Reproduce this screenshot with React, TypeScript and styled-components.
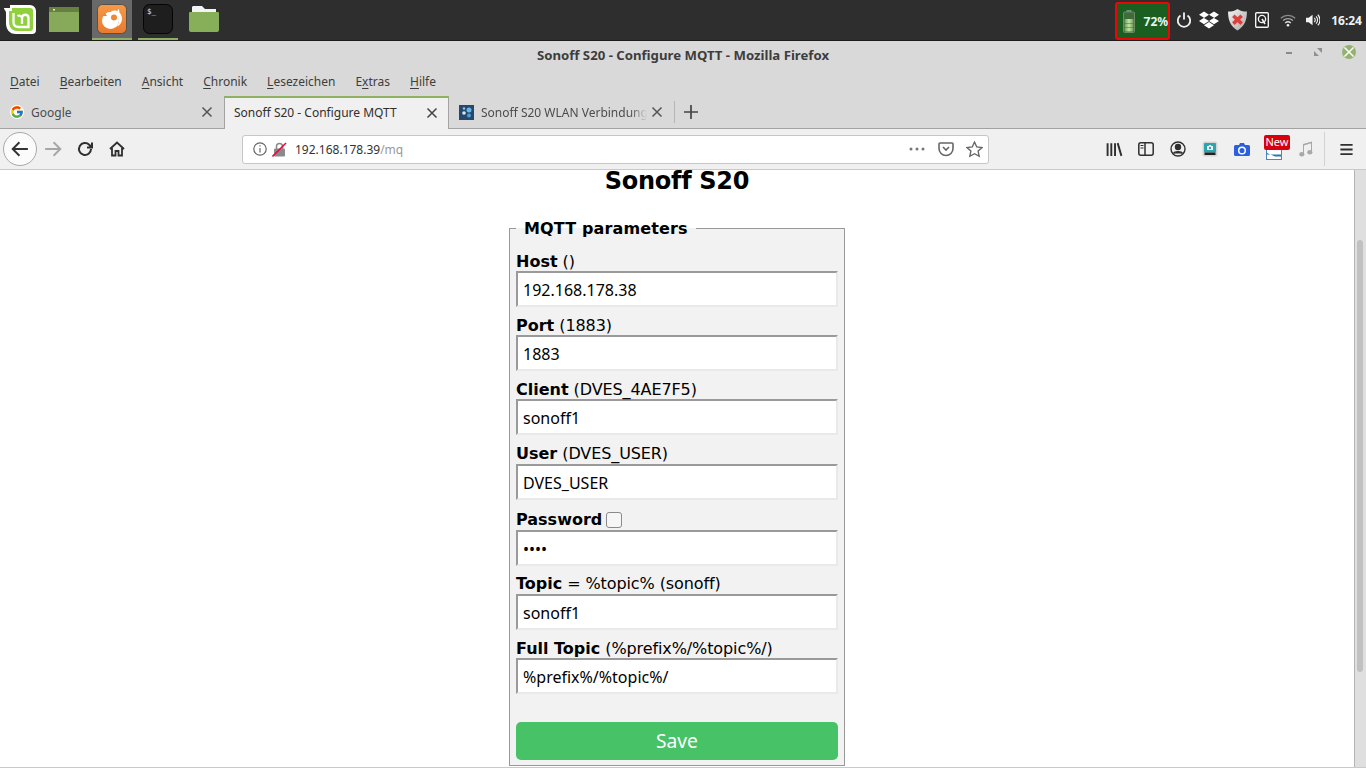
import { createGlobalStyle, styled } from "styled-components";
import { FcGoogle } from "react-icons/fc";
import { FaDropbox } from "react-icons/fa";

const GlobalStyle = createGlobalStyle`
  html, body {
    margin: 0;
    padding: 0;
    height: 768px;
    overflow: hidden;
    background: #d9d9d9;
  }
  * { box-sizing: border-box; }
`;

const Screen = styled.div`
  width: 1366px;
  height: 768px;
  display: flex;
  flex-direction: column;
  overflow: hidden;
  font-family: "Noto Sans", sans-serif;
`;

/* desktop panel */
const Panel = styled.div`
  height: 41px;
  flex: none;
  display: flex;
  align-items: flex-start;
  background: #2e2e2e;
  border-bottom: 1px solid #1c1c1c;
`;
const Launcher = styled.div`
  display: flex;
  align-items: center;
  height: 40px;
  padding-left: 4px;
`;
const TaskButton = styled.div<{ $active?: boolean; $running?: boolean; $w?: number; $gap?: number }>`
  width: ${(p) => p.$w ?? 40}px;
  height: 40px;
  display: flex;
  align-items: center;
  justify-content: center;
  margin-right: ${(p) => p.$gap ?? 6}px;
  background: ${(p) => (p.$active ? "#696969" : "transparent")};
  border-bottom: 2px solid ${(p) => (p.$running ? "#8fae63" : "transparent")};
`;
const Tray = styled.div`
  margin-left: auto;
  display: flex;
  align-items: center;
  height: 40px;
  padding-right: 4px;
`;
const BatteryBox = styled.div`
  width: 55px;
  height: 38px;
  margin-top: 2px;
  display: flex;
  align-items: center;
  justify-content: space-between;
  padding: 0 0 0 6px;
  background: #1a5f1f;
  border: 2px solid #ee0606;
  border-radius: 3px;
`;
const BatteryText = styled.span`
  font: bold 12px "Noto Sans", sans-serif;
  color: #e6f5f0;
`;
const TrayIcon = styled.div<{ $w: number }>`
  width: ${(p) => p.$w}px;
  height: 40px;
  display: flex;
  align-items: center;
  justify-content: center;
  color: #fff;
`;
const Clock = styled.span`
  font: bold 12px "Noto Sans", sans-serif;
  color: #eef2f5;
  margin-left: 11px;
`;

/* window chrome */
const TitleBar = styled.div`
  height: 28px;
  flex: none;
  position: relative;
  display: flex;
  align-items: center;
  justify-content: center;
  font-size: 13.2px;
  font-weight: 700;
  color: #3d3d3d;
`;
const WindowButtons = styled.div`
  position: absolute;
  right: 10px;
  top: 4px;
  display: flex;
  align-items: center;
  gap: 19px;
`;
const CloseDot = styled.div`
  width: 14px;
  height: 14px;
  border-radius: 50%;
  background: #93b26f;
  display: flex;
  align-items: center;
  justify-content: center;
`;
const MenuBar = styled.div`
  height: 25px;
  flex: none;
  display: flex;
  align-items: center;
  gap: 20px;
  padding-left: 10px;
  font-size: 12px;
  color: #3d3d3d;
`;
const MenuItem = styled.span`
  u { text-underline-offset: 2px; }
`;
const TabStrip = styled.div`
  height: 35px;
  flex: none;
  display: flex;
  align-items: flex-start;
  padding-top: 2px;
  border-bottom: 1px solid #a3a3a3;
`;
const Tab = styled.div<{ $active?: boolean; $w?: number }>`
  width: ${(p) => p.$w ?? 225}px;
  height: ${(p) => (p.$active ? 33 : 32)}px;
  flex: none;
  display: flex;
  align-items: center;
  gap: 7px;
  padding: ${(p) => (p.$active ? "0 10px 2px 9px" : "0 11px 0 10px")};
  font-size: 12px;
  color: ${(p) => (p.$active ? "#2f2f2f" : "#4c4c4c")};
  background: ${(p) => (p.$active ? "#f0f0f0" : "transparent")};
  border-top: ${(p) => (p.$active ? "2px solid #8fb15f" : "none")};
  border-left: ${(p) => (p.$active ? "1px solid #a3a3a3" : "none")};
  border-right: ${(p) => (p.$active ? "1px solid #a3a3a3" : "none")};
`;
const TabTitle = styled.span<{ $fade?: boolean }>`
  flex: 1;
  min-width: 0;
  white-space: nowrap;
  overflow: hidden;
  ${(p) =>
    p.$fade
      ? `margin-right: -3px; -webkit-mask-image: linear-gradient(to right, #000 90%, transparent);`
      : ""}
`;
const Favicon = styled(FcGoogle)`
  flex: none;
  background: #fff;
  border-radius: 7px;
`;
const FaviconSvg = styled.svg`
  flex: none;
`;
const CloseSvg = styled.svg`
  flex: none;
`;
const NewTab = styled.div`
  width: 32px;
  height: 22px;
  margin-top: 5px;
  border-left: 1px solid #b5b5b5;
  display: flex;
  align-items: center;
  justify-content: center;
  color: #444;
`;
const NavBar = styled.div`
  height: 41px;
  flex: none;
  display: flex;
  align-items: center;
  padding: 0 3px;
  background: #f0f0f0;
  border-bottom: 1px solid #c9c9c9;
`;
const BackButton = styled.div`
  width: 34px;
  height: 34px;
  flex: none;
  border-radius: 50%;
  border: 1px solid #a9a9a9;
  background: #fbfbfb;
  display: flex;
  align-items: center;
  justify-content: center;
  color: #333;
`;
const NavIcon = styled.div<{ $w?: number; $dim?: boolean }>`
  width: ${(p) => p.$w ?? 32}px;
  height: 32px;
  flex: none;
  display: flex;
  align-items: center;
  justify-content: center;
  color: ${(p) => (p.$dim ? "#a6a6a6" : "#2f2f2f")};
  position: relative;
`;
const UrlBar = styled.div`
  width: 747px;
  height: 29px;
  flex: none;
  margin: 0 109px 0 109px;
  display: flex;
  align-items: center;
  background: #fff;
  border: 1px solid #c6c6c6;
  border-radius: 3px;
  padding: 0 0 0 9px;
  font-size: 12px;
`;
const UrlText = styled.span`
  flex: 1;
  margin-left: 8px;
  color: #333;
  span { color: #999; }
`;
const UrlIcon = styled.div<{ $w: number; $gap?: number }>`
  width: ${(p) => p.$w}px;
  margin-left: ${(p) => p.$gap ?? 0}px;
  display: flex;
  align-items: center;
  justify-content: center;
  color: #666;
`;
const EnvelopeSvg = styled.svg`
  margin-top: 5px;
`;
const NewBadge = styled.span`
  position: absolute;
  left: 6px;
  top: 2px;
  width: 26px;
  height: 15px;
  line-height: 14px;
  text-align: center;
  font-size: 11px;
  color: #fff;
  background: #d7000f;
  border-radius: 2px;
`;
const ToolSeparator = styled.div`
  width: 1px;
  height: 34px;
  flex: none;
  background: #d2d2d2;
  margin: 0 4px 0 2px;
`;

/* page */
const Viewport = styled.div`
  flex: 1;
  min-height: 0;
  display: flex;
  background: #fff;
  border-bottom: 1px solid #c9c9c9;
`;
const Page = styled.div`
  flex: 1;
  display: flex;
  flex-direction: column;
  align-items: center;
  font-family: "DejaVu Sans", sans-serif;
  font-size: 16px;
  color: #000;
`;
const Heading = styled.h3`
  margin: 0 0 26px;
  font-size: 24px;
  line-height: 23px;
  font-weight: 700;
  letter-spacing: -0.3px;
  text-align: center;
`;
const FormBox = styled.fieldset`
  width: 336px;
  margin: 0;
  padding: 13px 6px 0;
  flex: none;
  background: #f2f2f2;
  border: 1px solid #999;
`;
const Legend = styled.legend`
  padding: 0 8px;
  font-weight: 700;
  line-height: 19px;
  letter-spacing: 0.13px;
`;
const Field = styled.div`
  margin-bottom: 8.2px;
`;
const FieldLabel = styled.label<{ $tall?: boolean }>`
  display: flex;
  align-items: center;
  gap: 4px;
  height: ${(p) => (p.$tall ? 22 : 20)}px;
  white-space: pre;
  line-height: 19px;
  padding-top: ${(p) => (p.$tall ? 2 : 0)}px;
`;
const Hint = styled.span`
  letter-spacing: -0.1px;
`;
const TextInput = styled.input`
  display: block;
  width: 100%;
  height: 36px;
  padding: 2px 5px 0;
  border: 2px solid;
  border-color: #9a9a9a #e9e9e9 #e9e9e9 #9a9a9a;
  border-radius: 0;
  background: #fff;
  font: 16px "Noto Sans", sans-serif;
  color: #000;
  outline: none;
`;
const Check = styled.span`
  display: inline-block;
  width: 16px;
  height: 16px;
  background: #f6f6f6;
  border: 1px solid #8a8a8a;
  border-radius: 3px;
`;
const SaveButton = styled.button`
  display: block;
  width: 100%;
  height: 38px;
  margin: 27.7px 0 5px;
  border: 0;
  border-radius: 5px;
  background: #47c266;
  color: #fff;
  font: 19.2px "Noto Sans", sans-serif;
  line-height: 38px;
  padding: 0;
`;
const ScrollTrack = styled.div`
  width: 12px;
  flex: none;
  background: #dfdfdf;
  border-left: 1px solid #b4b4b4;
  padding: 70px 2px 0;
`;
const ScrollThumb = styled.div`
  width: 6px;
  height: 432px;
  background: #c1c1c1;
  border-radius: 3px;
`;

const Close = ({ c = "#555" }: { c?: string }) => (
  <CloseSvg width="12" height="12" viewBox="0 0 12 12">
    <path d="M1.5 1.5l9 9M10.5 1.5l-9 9" stroke={c} strokeWidth="1.5" />
  </CloseSvg>
);

const MintLogo = () => (
  <svg width="32" height="29" viewBox="0 0 32 29">
    <path d="M0 3H6V0H26a6 6 0 0 1 6 6V25a4 4 0 0 1-4 4H12C5 29 2 24 2 18V8C2 5 0 5 0 3z" fill="#fff" />
    <path d="M8 3H26a3 3 0 0 1 3 3V23a3 3 0 0 1-3 3H13C8 26 5 22 5 17V6H8z" fill="#8fd03c" />
    <path d="M9.500 8V17C9.500 20 11.500 22 14.500 22H24.500V12.500a3.300 3.300 0 0 0-6.500 0V19M18 12.500a3.200 3.200 0 0 0-4.500-1.500" fill="none" stroke="#fff" strokeWidth="2.300" />
  </svg>
);

const WindowIcon = () => (
  <svg width="30" height="25" viewBox="0 0 30 25">
    <rect width="30" height="25" fill="#87a95a" />
    <rect width="30" height="5" fill="#66803f" />
    <rect x="4" y="2" width="2" height="1.5" fill="#e8eedd" />
  </svg>
);

const FirefoxIcon = () => (
  <svg width="30" height="30" viewBox="0 0 30 30">
    <defs>
      <linearGradient id="ffTile" x1="0" y1="0" x2="0" y2="1">
        <stop offset="0" stopColor="#f59a48" />
        <stop offset="1" stopColor="#e87a2e" />
      </linearGradient>
    </defs>
    <rect x="0.500" y="0.500" width="29" height="29" rx="5" fill="url(#ffTile)" stroke="#55504a" />
    <circle cx="13.500" cy="16.500" r="8.500" fill="#fff" />
    <path d="M14 7.500c4-2 8-.5 10 3 1.500 3 1.500 7-1 10-1 1-2 1.500-3 2 2-3 2.500-6 1-9-1-2-3-3-4.500-3z" fill="#fff" />
    <path d="M21.500 5c1 1 1 2.500.5 4l-2-1.500z" fill="#fff" />
    <circle cx="17" cy="13.500" r="3" fill="#ee8836" />
    <path d="M5 12l3-3 2 3z" fill="#ee8836" />
  </svg>
);

const TerminalIcon = () => (
  <svg width="30" height="30" viewBox="0 0 30 30">
    <rect x="0.500" y="0.500" width="29" height="29" rx="6" fill="#1e1e1e" stroke="#050505" />
    <text x="4" y="10" fontFamily="DejaVu Sans Mono" fontSize="7.500" fill="#e8e8e8">$_</text>
  </svg>
);

const FolderIcon = () => (
  <svg width="30" height="26" viewBox="0 0 30 26">
    <path d="M4 0h9l3 3h11v3H3V1z" fill="#f3f3f3" />
    <path d="M1 6h28a1 1 0 0 1 1 1v17a2 2 0 0 1-2 2H2a2 2 0 0 1-2-2V7a1 1 0 0 1 1-1z" fill="#87ae58" />
  </svg>
);

const BatteryIcon = () => (
  <svg width="12" height="23" viewBox="0 0 12 23">
    <defs>
      <linearGradient id="batCell" x1="0" y1="0" x2="1" y2="0">
        <stop offset="0" stopColor="#6f9a58" />
        <stop offset="0.500" stopColor="#c2e6a0" />
        <stop offset="1" stopColor="#6f9a58" />
      </linearGradient>
    </defs>
    <rect x="3.500" y="0" width="5" height="2.500" fill="#74907a" />
    <rect x="0.500" y="2" width="11" height="20.500" rx="1" fill="#3e6c3a" stroke="#6b8a66" />
    <rect x="1.500" y="9" width="9" height="4" fill="url(#batCell)" />
    <rect x="1.500" y="13.500" width="9" height="4" fill="url(#batCell)" />
    <rect x="1.500" y="18" width="9" height="3.500" fill="url(#batCell)" />
  </svg>
);

const PowerIcon = () => (
  <svg width="16" height="16" viewBox="0 0 16 16" fill="none" stroke="#f2f2f2" strokeWidth="1.800">
    <path d="M4.500 3.500a6.200 6.200 0 1 0 7 0M8 0.500v7" />
  </svg>
);

const ShieldIcon = () => (
  <svg width="21" height="22" viewBox="0 0 20 21">
    <defs>
      <linearGradient id="shieldFill" x1="0" y1="0" x2="1" y2="1">
        <stop offset="0" stopColor="#f4f4f4" />
        <stop offset="1" stopColor="#a8a8a8" />
      </linearGradient>
    </defs>
    <path d="M10 0c2 1.500 5 2.500 9 2.500 0 8-2 14-9 18C3 16.500 1 10.500 1 2.500 5 2.500 8 1.500 10 0z" fill="url(#shieldFill)" />
    <path d="M6 6.500l8 7.500M14 6.500l-8 7.500" stroke="#d9403a" strokeWidth="3.400" />
  </svg>
);

const DiskIcon = () => (
  <svg width="14" height="16" viewBox="0 0 14 16">
    <rect x="0.700" y="0.700" width="12.600" height="14.600" rx="1" fill="#222" stroke="#f4f4f4" strokeWidth="1.400" />
    <circle cx="7" cy="7" r="3.600" fill="none" stroke="#f4f4f4" strokeWidth="1.400" />
    <path d="M7 7l3 5" stroke="#f4f4f4" strokeWidth="1.600" />
  </svg>
);

const WifiIcon = () => (
  <svg width="16" height="13" viewBox="0 0 16 13" fill="none" strokeWidth="1.300">
    <path d="M.800 4.200c4-3.800 10.400-3.800 14.400 0" stroke="#8d8d8d" />
    <path d="M3 6.600c2.800-2.600 7.200-2.600 10 0" stroke="#a5a5a5" />
    <path d="M5.200 9c1.600-1.400 4-1.400 5.600 0" stroke="#e0e0e0" />
    <circle cx="8" cy="11.300" r="1.300" fill="#f2f2f2" />
  </svg>
);

const VolumeIcon = () => (
  <svg width="18" height="16" viewBox="0 0 16 14" fill="none">
    <path d="M0 4.500h3L7.500 1v12L3 9.500H0z" fill="#f2f2f2" />
    <path d="M9.500 4.500a3.500 3.500 0 0 1 0 5M11.500 2.800a6 6 0 0 1 0 8.400M13.500 1a8.500 8.500 0 0 1 0 12" stroke="#f2f2f2" strokeWidth="1.300" />
  </svg>
);

const LockIcon = () => (
  <svg width="15" height="15" viewBox="0 0 15 15">
    <rect x="2" y="6.500" width="11" height="8" rx="1" fill="#8a8a8a" />
    <path d="M4.500 7V4.500a3 3 0 0 1 6 0V7" fill="none" stroke="#8a8a8a" strokeWidth="1.500" />
    <path d="M0.500 14.500L14 1" stroke="#ff0039" strokeWidth="1.600" />
  </svg>
);

const StrokeIcon = ({ d, w = 16, sw = 1.6 }: { d: string; w?: number; sw?: number }) => (
  <svg width={w} height={w} viewBox="0 0 16 16" fill="none" stroke="currentColor" strokeWidth={sw}>
    <path d={d} />
  </svg>
);

const menus: [string, string, string][] = [
  ["", "D", "atei"],
  ["", "B", "earbeiten"],
  ["", "A", "nsicht"],
  ["", "C", "hronik"],
  ["", "L", "esezeichen"],
  ["E", "x", "tras"],
  ["", "H", "ilfe"],
];

const fields: { name: string; hint: string; value: string; type?: string }[] = [
  { name: "Host", hint: " ()", value: "192.168.178.38" },
  { name: "Port", hint: " (1883)", value: "1883" },
  { name: "Client", hint: " (DVES_4AE7F5)", value: "sonoff1" },
  { name: "User", hint: " (DVES_USER)", value: "DVES_USER" },
  { name: "Password", hint: "", value: "1234", type: "password" },
  { name: "Topic", hint: " = %topic% (sonoff)", value: "sonoff1" },
  { name: "Full Topic", hint: " (%prefix%/%topic%/)", value: "%prefix%/%topic%/" },
];

function App() {
  return (
    <Screen>
      <GlobalStyle />
      <Panel>
        <Launcher>
          <TaskButton $w={32} $gap={13}><MintLogo /></TaskButton>
          <TaskButton $w={30} $gap={13}><WindowIcon /></TaskButton>
          <TaskButton $active $running><FirefoxIcon /></TaskButton>
          <TaskButton $running $gap={11}><TerminalIcon /></TaskButton>
          <TaskButton $w={30}><FolderIcon /></TaskButton>
        </Launcher>
        <Tray>
          <BatteryBox>
            <BatteryIcon />
            <BatteryText>72%</BatteryText>
          </BatteryBox>
          <TrayIcon $w={28}><PowerIcon /></TrayIcon>
          <TrayIcon $w={22}><FaDropbox size={20} /></TrayIcon>
          <TrayIcon $w={34}><ShieldIcon /></TrayIcon>
          <TrayIcon $w={16}><DiskIcon /></TrayIcon>
          <TrayIcon $w={36}><WifiIcon /></TrayIcon>
          <TrayIcon $w={14}><VolumeIcon /></TrayIcon>
          <Clock>16:24</Clock>
        </Tray>
      </Panel>

      <TitleBar>
        Sonoff S20 - Configure MQTT - Mozilla Firefox
        <WindowButtons>
          <svg width="10" height="10" viewBox="0 0 10 10"><rect x="2" y="5" width="6" height="2" fill="#8a8a8a" /></svg>
          <svg width="10" height="10" viewBox="0 0 10 10"><path d="M4 1h5v5zM1 4l5 5H1z" fill="#8f8f8f" /></svg>
          <CloseDot><Close c="#fff" /></CloseDot>
        </WindowButtons>
      </TitleBar>

      <MenuBar>
        {menus.map(([a, u, b]) => (
          <MenuItem key={u + b}>{a}<u>{u}</u>{b}</MenuItem>
        ))}
      </MenuBar>

      <TabStrip>
        <Tab $w={224}>
          <Favicon size={14} />
          <TabTitle>Google</TabTitle>
          <Close />
        </Tab>
        <Tab $active>
          <TabTitle>Sonoff S20 - Configure MQTT</TabTitle>
          <Close c="#444" />
        </Tab>
        <Tab>
          <FaviconSvg width="15" height="15" viewBox="0 0 15 15">
            <rect width="15" height="15" fill="#26486e" />
            <circle cx="10" cy="5" r="2.500" fill="#69b7e3" />
            <circle cx="5" cy="8" r="1.800" fill="#d7e8f3" />
            <circle cx="10" cy="10.500" r="2" fill="#4f9fd0" />
            <circle cx="5" cy="3.500" r="1.200" fill="#8fc8e8" />
          </FaviconSvg>
          <TabTitle $fade>Sonoff S20 WLAN Verbindung herstellen</TabTitle>
          <Close />
        </Tab>
        <NewTab>
          <StrokeIcon d="M8 1v14M1 8h14" sw={1.7} />
        </NewTab>
      </TabStrip>

      <NavBar>
        <BackButton>
          <StrokeIcon w={18} sw={1.7} d="M15 8H1.500M7.500 2L1.500 8l6 6" />
        </BackButton>
        <NavIcon $dim><StrokeIcon w={18} sw={1.7} d="M1 8h13.500M8.500 2l6 6-6 6" /></NavIcon>
        <NavIcon><StrokeIcon w={16} sw={2} d="M14 8a6 6 0 1 1-1.800-4.300L15 6.500M15 1.500v5h-5" /></NavIcon>
        <NavIcon><StrokeIcon w={16} sw={1.8} d="M1 8l7-6.500L15 8M3 7v7.500h3.500V10h3v4.500H13V7" /></NavIcon>
        <UrlBar>
          <UrlIcon $w={15}>
            <svg width="14" height="14" viewBox="0 0 14 14" fill="none" stroke="#666" strokeWidth="1.200">
              <circle cx="7" cy="7" r="6.200" />
              <path d="M7 6v4.500M7 3.200v1.400" />
            </svg>
          </UrlIcon>
          <UrlIcon $w={15} $gap={5}><LockIcon /></UrlIcon>
          <UrlText>192.168.178.39<span>/mq</span></UrlText>
          <UrlIcon $w={28}>
            <svg width="16" height="4" viewBox="0 0 16 4" fill="#777"><circle cx="2" cy="2" r="1.500" /><circle cx="8" cy="2" r="1.500" /><circle cx="14" cy="2" r="1.500" /></svg>
          </UrlIcon>
          <UrlIcon $w={29}>
            <StrokeIcon w={16} d="M2 2h12a1 1 0 0 1 1 1v4.500a7 7 0 0 1-14 0V3a1 1 0 0 1 1-1zM5 6l3 3 3-3" />
          </UrlIcon>
          <UrlIcon $w={28}>
            <StrokeIcon w={17} sw={1.300} d="M8 1l2.100 4.600 5 .6-3.700 3.300 1 4.900L8 12l-4.400 2.400 1-4.900L.900 6.200l5-.6z" />
          </UrlIcon>
        </UrlBar>
        <NavIcon><StrokeIcon w={17} sw={1.800} d="M1.500 2v12M5 2v12M8.500 2v12M11 2l3.500 12" /></NavIcon>
        <NavIcon>
          <svg width="16" height="14" viewBox="0 0 16 14" fill="none" stroke="#2f2f2f" strokeWidth="1.500">
            <rect x="0.800" y="0.800" width="14.400" height="12.400" rx="2" />
            <path d="M7 1v12" />
            <path d="M2.500 3.500h3M2.500 6h3" strokeWidth="1" />
          </svg>
        </NavIcon>
        <NavIcon>
          <svg width="16" height="16" viewBox="0 0 16 16" fill="none" stroke="#2f2f2f" strokeWidth="1.400">
            <circle cx="8" cy="8" r="7" />
            <circle cx="8" cy="6" r="2.500" fill="#2f2f2f" />
            <path d="M3.500 12.500c1-2.500 8-2.500 9 0" fill="#2f2f2f" />
          </svg>
        </NavIcon>
        <NavIcon>
          <svg width="16" height="16" viewBox="0 0 16 16">
            <rect x="0.500" y="0.500" width="15" height="15" rx="2.500" fill="#d5d5d5" />
            <rect x="2" y="2" width="12" height="9.500" rx="1" fill="#2fa3ad" />
            <rect x="2.500" y="11.500" width="11" height="2.500" fill="#222" />
            <path d="M5 5h1.500l.7-1h1.600l.7 1H11v4H5z" fill="#e8f6f7" />
            <circle cx="8" cy="7" r="1.200" fill="#2fa3ad" />
          </svg>
        </NavIcon>
        <NavIcon>
          <svg width="16" height="13" viewBox="0 0 16 13">
            <path d="M1.500 2H5l1-2h4l1 2h3.500A1.500 1.500 0 0 1 16 3.500v8a1.500 1.500 0 0 1-1.500 1.500h-13A1.500 1.500 0 0 1 0 11.500v-8A1.500 1.500 0 0 1 1.500 2z" fill="#2c5fe0" />
            <circle cx="8" cy="7.500" r="3.300" fill="#2c5fe0" stroke="#fff" strokeWidth="1.500" />
          </svg>
        </NavIcon>
        <NavIcon>
          <EnvelopeSvg width="16" height="16" viewBox="0 0 16 16">
            <rect x="0.500" y="2" width="15" height="13.500" fill="#fff" stroke="#4d86bd" />
            <path d="M1 9l8 3.500h6v-2H1z" fill="#2f72b5" />
          </EnvelopeSvg>
          <NewBadge>New</NewBadge>
        </NavIcon>
        <NavIcon>
          <svg width="14" height="16" viewBox="0 0 14 16" fill="#a8a8a8">
            <path d="M4 3l9-2.500V2L5 4.500V13H4zM12 2h1v9h-1z" />
            <ellipse cx="2.800" cy="13.300" rx="2.600" ry="2.200" />
            <ellipse cx="10.800" cy="11.300" rx="2.600" ry="2.200" />
          </svg>
        </NavIcon>
        <ToolSeparator />
        <NavIcon $w={34}>
          <StrokeIcon w={15} sw={1.900} d="M1.500 3h13M1.500 8h13M1.500 13h13" />
        </NavIcon>
      </NavBar>

      <Viewport>
        <Page>
          <Heading>Sonoff S20</Heading>
          <FormBox>
            <Legend>MQTT parameters</Legend>
            {fields.map((f) => (
              <Field key={f.name}>
                <FieldLabel $tall={f.type === "password"}>
                  <span><b>{f.name}</b><Hint>{f.hint}</Hint></span>
                  {f.type === "password" && <Check />}
                </FieldLabel>
                <TextInput type={f.type ?? "text"} value={f.value} readOnly />
              </Field>
            ))}
            <SaveButton type="button">Save</SaveButton>
          </FormBox>
        </Page>
        <ScrollTrack><ScrollThumb /></ScrollTrack>
      </Viewport>
    </Screen>
  );
}

export default App;
